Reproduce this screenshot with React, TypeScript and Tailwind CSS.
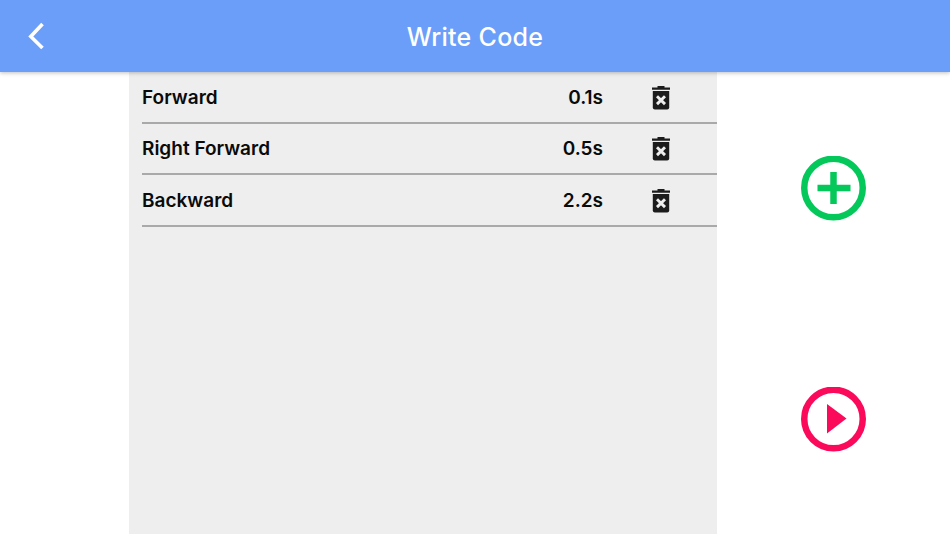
const steps = [
	{ name: 'Forward', time: '0.1s' },
	{ name: 'Right Forward', time: '0.5s' },
	{ name: 'Backward', time: '2.2s' },
]

function TrashIcon() {
	return (
		<svg width="20" height="26" viewBox="0 0 20 26">
			<path d="M6.500 2h7v1.500H19v2.300H1V3.500h5.500z" fill="#1c1c1c" />
			<path d="M1.800 7h16.400v16.500a2 2 0 0 1-2 2H3.800a2 2 0 0 1-2-2z" fill="#1c1c1c" />
			<path d="M6 12.300l8 7.800M14 12.300l-8 7.800" stroke="#eeeeee" strokeWidth="2.900" fill="none" />
		</svg>
	)
}

export default function App() {
	return (
		<div className="flex h-[534px] w-[950px] flex-col overflow-hidden bg-white font-['Inter',sans-serif]">
			<header className="relative z-10 flex h-[72px] shrink-0 items-center bg-[#6a9ef9] shadow-[0_1px_4px_rgba(0,0,0,0.25)]">
				<button className="ml-[26px] flex h-[28px] w-[20px] items-center justify-center">
					<svg width="20" height="28" viewBox="0 0 20 28" fill="none" stroke="white" strokeWidth="3.600">
						<path d="M16.500 2 4.800 14.500 16.500 26" />
					</svg>
				</button>
				<h1 className="absolute inset-x-0 top-[19px] text-center text-[25px] font-medium tracking-[0.3px] text-white">
					Write Code
				</h1>
			</header>
			<main className="flex min-h-0 flex-1">
				<div className="ml-[129px] w-[588px] bg-[#eeeeee] pl-[13px]">
					{steps.map((step) => (
						<div
							key={step.name}
							className="flex h-[51.500px] items-center border-b-2 border-[#a9a9a9] text-[19px] font-semibold text-[#0a0a0a]"
						>
							<span className="flex-1 pt-[2px]">{step.name}</span>
							<span className="w-[60px] pt-[2px] text-right">{step.time}</span>
							<span className="ml-[48px] mr-[46px] flex w-[20px] justify-center">
								<TrashIcon />
							</span>
						</div>
					))}
				</div>
				<div className="flex flex-1 flex-col items-center pt-[84px]">
					<button className="h-[65px] w-[65px]">
						<svg viewBox="0 0 65 65" className="h-full w-full" fill="none">
							<circle cx="32.500" cy="32" r="29.250" stroke="#05c85a" strokeWidth="6.500" />
							<path d="M32.500 16v32M16.500 32h33" stroke="#05c85a" strokeWidth="6.500" />
						</svg>
					</button>
					<button className="mt-[166px] h-[65px] w-[65px]">
						<svg viewBox="0 0 65 65" className="h-full w-full" fill="none">
							<circle cx="32.500" cy="32" r="29.250" stroke="#fb0a5c" strokeWidth="6.500" />
							<path d="M26 17l19.500 14.500L26 46.500z" fill="#fb0a5c" />
						</svg>
					</button>
				</div>
			</main>
		</div>
	)
}
